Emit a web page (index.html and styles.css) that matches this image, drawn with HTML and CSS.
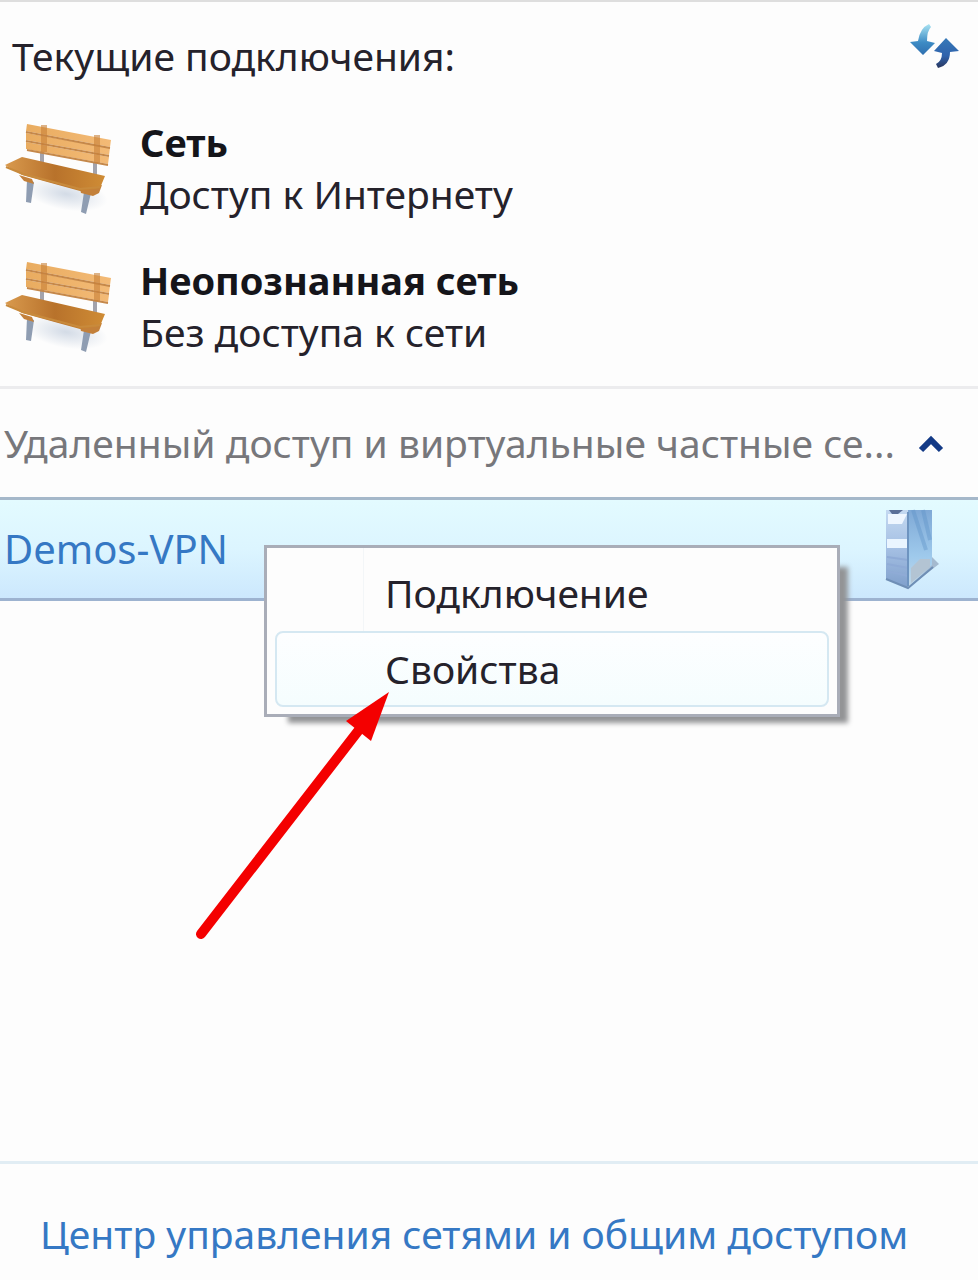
FILE: index.html
```
<!DOCTYPE html>
<html lang="ru">
<head>
  <meta charset="UTF-8" />
  <title>Текущие подключения</title>
  <link rel="stylesheet" href="styles.css">
</head>
<body>
  <svg width="0" height="0" class="defs" aria-hidden="true">
    <defs>
      <linearGradient id="seat" x1="0" y1="0" x2="1" y2="0">
        <stop offset="0" stop-color="#d99a4e" />
        <stop offset="0.5" stop-color="#b8722b" />
        <stop offset="1" stop-color="#cf8c35" />
      </linearGradient>
      <linearGradient id="plank" x1="0" y1="0" x2="1" y2="0">
        <stop offset="0" stop-color="#e9ac60" />
        <stop offset="1" stop-color="#f3ba76" />
      </linearGradient>
      <radialGradient id="shade">
        <stop offset="0" stop-color="#d3dbe6" />
        <stop offset="1" stop-color="#d3dbe6" stop-opacity="0" />
      </radialGradient>
      <symbol id="bench" viewBox="8 0 116 100">
        <ellipse cx="70" cy="78" rx="42" ry="16" fill="url(#shade)" transform="rotate(10 70 78)" />
        <path d="M46 34v14M99 46v14" stroke="#a3a3ac" stroke-width="4" />
        <path d="M31 8l84 16-1 7-84-16z" fill="url(#plank)" />
        <path d="M30 17l84 15-1 7-83-15z" fill="url(#plank)" />
        <path d="M30 26l83 15-1 7-82-15z" fill="url(#plank)" />
        <path d="M30 16l84 16M30 25l83 15M31 34l81 15" stroke="#c5884a" stroke-width="2" fill="none" />
        <path d="M48 9v27M101 19v28" stroke="#c98138" stroke-width="6" opacity="0.6" />
        <path d="M31 64l7 2-3 21-5-1zM88 76l7 1-5 21-5-2z" fill="#8f9db2" />
        <path d="M23 59l13 4 2 5-10-3zM84 73l22-4-3 8-6 3-12-3z" fill="#c3803a" />
        <path d="M9 49l17-8 83 19-5 12-20 3-58-16z" fill="url(#seat)" />
        <path d="M10 51l17 7 57 15 20-2" stroke="#c88a3c" stroke-width="2" fill="none" />
      </symbol>
    </defs>
  </svg>

  <main class="flyout">
    <section class="current">
      <header class="title-row">
        <h1>Текущие подключения:</h1>
        <button class="refresh" type="button" aria-label="Обновить">
          <svg viewBox="0 0 50 46" width="50" height="46">
            <defs>
              <linearGradient id="down" x1="0" y1="0" x2="0" y2="1">
                <stop offset="0" stop-color="#a9e4f3" />
                <stop offset="0.6" stop-color="#3d8bc4" />
                <stop offset="1" stop-color="#2f6fb0" />
              </linearGradient>
              <linearGradient id="up" x1="0" y1="0" x2="0" y2="1">
                <stop offset="0" stop-color="#3679b8" />
                <stop offset="0.6" stop-color="#2f62ac" />
                <stop offset="1" stop-color="#29365e" />
              </linearGradient>
            </defs>
            <path d="M19 0Q10 4 8 17L0 18l13 13 12-12-8-2Q17 7 21 3z" fill="url(#down)" />
            <path d="M36 14L24 27l8 2q0 8-6 11l2 4q12-3 12-16l9-1z" fill="url(#up)" />
          </svg>
        </button>
      </header>

      <div class="network">
        <svg class="bench" aria-hidden="true"><use href="#bench" /></svg>
        <div>
          <h2>Сеть</h2>
          <p>Доступ к Интернету</p>
        </div>
      </div>
      <div class="network">
        <svg class="bench" aria-hidden="true"><use href="#bench" /></svg>
        <div>
          <h2>Неопознанная сеть</h2>
          <p>Без доступа к сети</p>
        </div>
      </div>
    </section>

    <button class="group" type="button" aria-expanded="true">
      <span>Удаленный доступ и виртуальные частные се...</span>
      <svg viewBox="0 0 26 20" width="26" height="20">
        <path d="M3 17l10-10 10 10" fill="none" stroke="#133a86" stroke-width="6" />
      </svg>
    </button>

    <div class="vpn">
      <a href="#">Demos-VPN</a>
      <svg class="server" viewBox="0 0 56 82" width="56" height="82" aria-hidden="true">
        <defs>
          <linearGradient id="front" x1="0" y1="0" x2="0" y2="1">
            <stop offset="0" stop-color="#c4d9f1" />
            <stop offset="0.5" stop-color="#a4bfe3" />
            <stop offset="1" stop-color="#7f9fcb" />
          </linearGradient>
          <linearGradient id="side" x1="0" y1="0" x2="0" y2="1">
            <stop offset="0" stop-color="#7fa9d6" />
            <stop offset="0.6" stop-color="#9fcaec" />
            <stop offset="1" stop-color="#c3d9e8" />
          </linearGradient>
        </defs>
        <path d="M24 80l31-24-9-9z" fill="#a5bacf" />
        <path d="M2 2h22v78L2 71z" fill="url(#front)" />
        <path d="M24 2h24v55L24 80z" fill="url(#side)" />
        <path d="M4 6h19l-5 10H4z" fill="#eef6ff" />
        <path d="M5 2h14l-5 4H8z" fill="#5a6f98" />
        <path d="M3 31h20v9H3z" fill="#eaf5ff" />
        <path d="M3 49l21 3M3 56l21 4M3 63l21 5" stroke="#8fabd6" stroke-width="2" />
        <path d="M29 2l13 40M39 2l7 30" stroke="#5e93c8" stroke-width="4" opacity="0.4" />
        <path d="M27 60l9-9h10v8L27 75z" fill="#b3c4d3" />
        <path d="M2 71l22 9 25-21" fill="none" stroke="#6f8fb6" stroke-width="2" />
        <path d="M24 4v74" stroke="#6e94c0" stroke-width="2" />
      </svg>

      <div class="menu" role="menu">
        <button type="button" role="menuitem">Подключение</button>
        <button class="active" type="button" role="menuitem">Свойства</button>
        <svg class="arrow" viewBox="0 0 200 256" width="200" height="256" aria-hidden="true">
          <path d="M9 244L170 36" stroke="#f40000" stroke-width="10" stroke-linecap="round" />
          <path d="M197 2l-43 29 25 20z" fill="#f40000" />
        </svg>
      </div>
    </div>

    <footer>
      <a href="#">Центр управления сетями и общим доступом</a>
    </footer>
  </main>
</body>
</html>
```
FILE: styles.css
```
* {
  box-sizing: border-box;
}
body {
  margin: 0;
  background-color: #fdfdfd;
  color: #25222b;
  font-family: "Noto Sans", "Open Sans", sans-serif;
  font-size: 39px;
  line-height: 52px;
}
h1, h2, p {
  margin: 0;
  font-size: inherit;
}
h1 {
  font-weight: normal;
}
h2 {
  color: #15151a;
  font-size: 38px;
}
button {
  background: none;
  border: 0;
  padding: 0;
  color: inherit;
  font: inherit;
  text-align: left;
}
a {
  color: #3578c4;
  text-decoration: none;
}
.defs {
  position: absolute;
}
.flyout {
  display: flex;
  flex-direction: column;
  min-height: 100vh;
  border-top: 2px solid #dedede;
}
.current {
  display: flex;
  flex-direction: column;
  gap: 34px;
  padding: 28px 18px 28px 4px;
  border-bottom: 3px solid #ececee;
}
.title-row {
  display: flex;
  justify-content: space-between;
  height: 52px;
  padding-left: 8px;
}
.refresh {
  height: 46px;
  margin-top: -6px;
}
.refresh svg, .group svg {
  display: block;
}
.network {
  display: flex;
  gap: 20px;
}
.bench {
  width: 116px;
  height: 100px;
}
.group {
  display: flex;
  align-items: center;
  justify-content: space-between;
  padding: 28px 34px 28px 4px;
  color: #77777b;
  white-space: nowrap;
}
.vpn {
  position: relative;
  display: flex;
  align-items: center;
  justify-content: space-between;
  height: 104px;
  padding: 0 38px 0 4px;
  background: linear-gradient(#e3fbff, #dcf5ff 50%, #cce8fd);
  border-top: 3px solid #a5b8ca;
  border-bottom: 3px solid #9db3d0;
}
.vpn > a {
  font-size: 40px;
}
.menu {
  position: absolute;
  top: 45px;
  left: 264px;
  display: flex;
  flex-direction: column;
  width: 576px;
  padding: 7px 8px;
  background: linear-gradient(#f3f6f8, #f3f6f8) 96px 0 / 1px 100% no-repeat #fdfdfd;
  border: 3px solid #a9adb8;
  box-shadow: 16px 14px 5px -8px #939496;
}
.menu button {
  height: 76px;
  padding-left: 108px;
  border: 2px solid transparent;
  border-radius: 8px;
}
.menu .active {
  background: linear-gradient(#fdfeff, #f5fdfe);
  border-color: #d5e8f2;
}
.arrow {
  position: absolute;
  top: 142px;
  left: -75px;
}
footer {
  margin-top: auto;
  padding: 44px 40px 20px;
  border-top: 3px solid #e1edf4;
}
```
